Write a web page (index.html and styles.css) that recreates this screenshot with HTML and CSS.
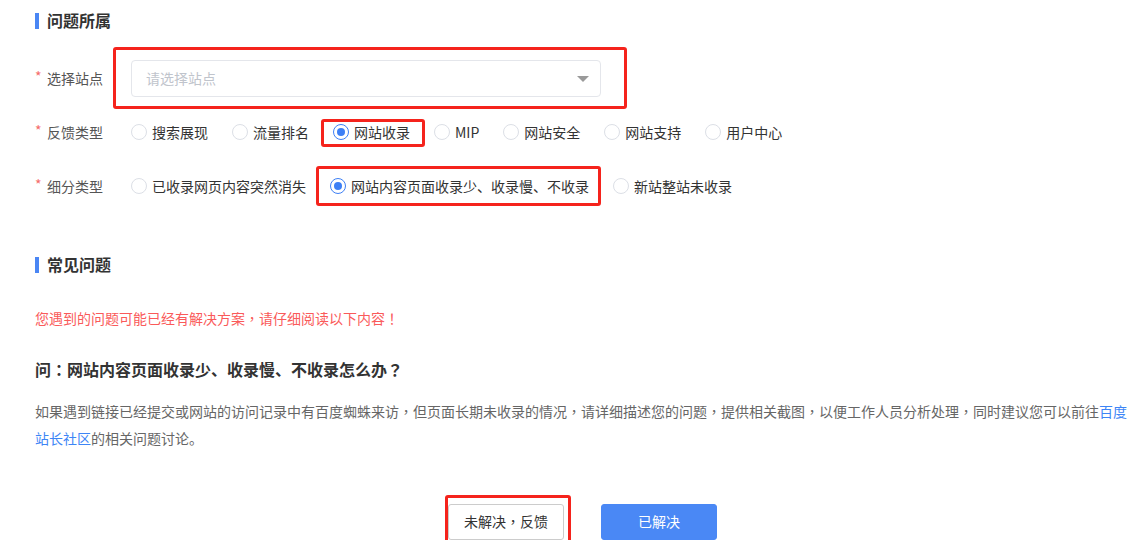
FILE: index.html
```html
<!DOCTYPE html>
<html lang="zh-CN">
<head>
<meta charset="utf-8">
<title>问题反馈</title>
<link rel="stylesheet" href="styles.css">
</head>
<body>
<div class="page">
  <h2 class="sec-title">问题所属</h2>

  <div class="form">
    <div class="row">
      <div class="label"><span class="req">*</span>选择站点</div>
      <div class="field">
        <div class="select-wrap">
          <div class="select">
            <span class="placeholder">请选择站点</span>
            <span class="arrow"></span>
          </div>
          <span class="mark mark-select"></span>
        </div>
      </div>
    </div>

    <div class="row">
      <div class="label"><span class="req">*</span>反馈类型</div>
      <div class="field radios">
        <label class="radio"><span class="dot"></span>搜索展现</label>
        <label class="radio"><span class="dot"></span>流量排名</label>
        <label class="radio checked"><span class="dot"></span>网站收录<span class="mark mark-type"></span></label>
        <label class="radio"><span class="dot"></span>MIP</label>
        <label class="radio"><span class="dot"></span>网站安全</label>
        <label class="radio"><span class="dot"></span>网站支持</label>
        <label class="radio"><span class="dot"></span>用户中心</label>
      </div>
    </div>

    <div class="row">
      <div class="label"><span class="req">*</span>细分类型</div>
      <div class="field radios">
        <label class="radio"><span class="dot"></span>已收录网页内容突然消失</label>
        <label class="radio checked"><span class="dot"></span>网站内容页面收录少、收录慢、不收录<span class="mark mark-sub"></span></label>
        <label class="radio"><span class="dot"></span>新站整站未收录</label>
      </div>
    </div>
  </div>

  <h2 class="sec-title sec-faq">常见问题</h2>

  <p class="warn">您遇到的问题可能已经有解决方案<span class="pc" lang="zh-Hant-TW">，</span>请仔细阅读以下内容<span class="pc" lang="zh-Hant-TW">！</span></p>

  <h3 class="question">问<span class="pc" lang="zh-Hant-TW">：</span>网站内容页面收录少、收录慢、不收录怎么办<span class="pc" lang="zh-Hant-TW">？</span></h3>

  <p class="answer">如果遇到链接已经提交或网站的访问记录中有百度蜘蛛来访<span class="pc" lang="zh-Hant-TW">，</span>但页面长期未收录的情况<span class="pc" lang="zh-Hant-TW">，</span>请详细描述您的问题<span class="pc" lang="zh-Hant-TW">，</span>提供相关截图<span class="pc" lang="zh-Hant-TW">，</span>以便工作人员分析处理<span class="pc" lang="zh-Hant-TW">，</span>同时建议您可以前往<a class="link" href="#">百度站长社区</a>的相关问题讨论。</p>

  <div class="actions">
    <button class="btn btn-plain">未解决<span class="pc" lang="zh-Hant-TW">，</span>反馈<span class="mark mark-btn"></span></button>
    <button class="btn btn-primary">已解决</button>
  </div>
</div>
</body>
</html>
```

FILE: styles.css
```css
* {
  box-sizing: border-box;
}

html, body {
  margin: 0;
  padding: 0;
  background: #ffffff;
}

body {
  font-family: "Noto Sans CJK SC", "Noto Sans", sans-serif;
  font-size: 14px;
  color: #333333;
}

.page {
  padding: 10px 0 0 35px;
  width: 1130px;
}

.pc {
  font-family: "Noto Sans CJK TC", "Noto Sans CJK SC", sans-serif;
}

.sec-title {
  display: flex;
  align-items: center;
  margin: 0;
  height: 20px;
  line-height: 20px;
  font-size: 16px;
  font-weight: bold;
  color: #333333;
}

.sec-title::before {
  content: "";
  display: block;
  width: 4px;
  height: 16px;
  margin-right: 8px;
  margin-top: 1px;
  background: #4a86f4;
}

.form {
  margin-top: 30px;
  display: flex;
  flex-direction: column;
  gap: 17px;
}

.row {
  display: flex;
  align-items: center;
  height: 37px;
}

.label {
  width: 96px;
  flex: none;
  display: flex;
  align-items: center;
  color: #555555;
  font-size: 14px;
  line-height: 20px;
  margin-top: -2px;
}

.req {
  color: #f56c6c;
  width: 12px;
  font-size: 14px;
  position: relative;
  top: -2px;
}

.field {
  display: flex;
  align-items: center;
}

.select-wrap {
  position: relative;
}

.select {
  width: 470px;
  height: 37px;
  border: 1px solid #e4e6eb;
  border-radius: 4px;
  display: flex;
  align-items: center;
  justify-content: space-between;
  padding: 0 11px 0 14px;
}

.placeholder {
  color: #c0c4cc;
  font-size: 14px;
  line-height: 20px;
  margin-top: -2px;
}

.arrow {
  width: 0;
  height: 0;
  border-left: 6px solid transparent;
  border-right: 6px solid transparent;
  border-top: 6px solid #9a9a9a;
  margin-top: 0;
}

.radios {
  gap: 24px;
  margin-top: -2px;
}

.radio {
  position: relative;
  display: flex;
  align-items: center;
  gap: 5px;
  color: #333333;
  font-size: 14px;
  line-height: 20px;
  white-space: nowrap;
}

.dot {
  width: 16px;
  height: 16px;
  border: 1px solid #dcdfe6;
  border-radius: 50%;
  background: #ffffff;
  display: flex;
  align-items: center;
  justify-content: center;
  margin-top: 1px;
}

.radio.checked .dot {
  border-color: #3d7ff5;
}

.radio.checked .dot::after {
  content: "";
  width: 8px;
  height: 8px;
  border-radius: 50%;
  background: #3d7ff5;
}

.mark {
  position: absolute;
  border: 3px solid #f5231c;
  border-radius: 3px;
  pointer-events: none;
}

.mark-select {
  left: -18px;
  right: -26px;
  top: -13px;
  bottom: -12px;
}

.mark-type {
  left: -12px;
  right: -15px;
  top: -3px;
  bottom: -5px;
}

.mark-sub {
  left: -14px;
  right: -12px;
  top: -10px;
  bottom: -10px;
}

.sec-faq {
  margin-top: 49px;
}

.warn {
  margin: 34px 0 0;
  line-height: 20px;
  font-size: 14px;
  color: #fa5a5a;
}

.question {
  margin: 31px 0 0;
  font-size: 16px;
  line-height: 20px;
  font-weight: bold;
  color: #333333;
}

.answer {
  margin: 19px 0 0;
  width: 1095px;
  font-size: 14px;
  line-height: 27px;
  color: #666666;
}

.link {
  color: #3d85f6;
  text-decoration: none;
}

.actions {
  width: 1095px;
  margin-top: 52px;
  display: flex;
  justify-content: center;
  gap: 37px;
}

.btn {
  position: relative;
  width: 116px;
  height: 36px;
  border-radius: 3px;
  font-family: "Noto Sans CJK SC", "Noto Sans", sans-serif;
  font-size: 14px;
  line-height: 20px;
  cursor: pointer;
  padding: 0 0 2px;
}

.btn-plain {
  background: #ffffff;
  border: 1px solid #cccccc;
  color: #333333;
}

.btn-primary {
  background: #4a88f5;
  border: 1px solid #4a88f5;
  color: #ffffff;
}

.mark-btn {
  left: -4px;
  right: -8px;
  top: -10px;
  bottom: -11px;
}
```
